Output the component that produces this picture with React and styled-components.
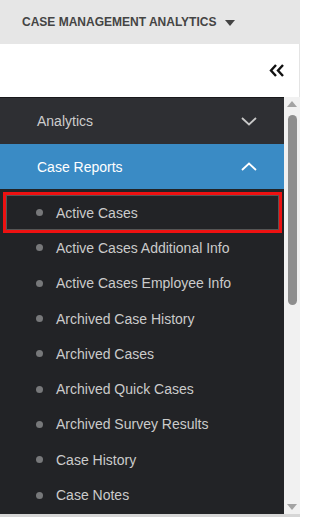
import React from 'react';
import styled, { createGlobalStyle } from 'styled-components';

const GlobalStyle = createGlobalStyle`
  html, body {
    margin: 0;
    padding: 0;
    background: #ffffff;
    font-family: "Liberation Sans", Arial, sans-serif;
  }
`;

const Page = styled.div`
  width: 300px;
  height: 517px;
  display: flex;
  flex-direction: column;
  overflow: hidden;
`;

const TopBar = styled.div`
  height: 44px;
  flex: none;
  background: #e6e6e6;
  display: flex;
  align-items: center;
  gap: 9px;
  padding-left: 22px;
  color: #444444;
  font-size: 12px;
  font-weight: bold;
  text-transform: uppercase;
`;

const Caret = styled.span`
  width: 0;
  height: 0;
  border-left: 5px solid transparent;
  border-right: 5px solid transparent;
  border-top: 6px solid #444444;
  margin-top: 1px;
`;

const CollapseBar = styled.div`
  height: 53px;
  flex: none;
  background: #ffffff;
  display: flex;
  align-items: center;
  justify-content: flex-end;
  padding-right: 14px;
  border-right: 1px solid #e4e4e4;
  box-sizing: border-box;
`;

const Body = styled.div`
  flex: 1;
  display: flex;
  min-height: 0;
  border-bottom: 3px solid #d6d6d6;
`;

const Menu = styled.div`
  flex: 1;
  background: #222326;
  border-top: 1px solid #18191b;
  overflow: hidden;
`;

const GroupRow = styled.div`
  height: ${(p) => p.$h}px;
  display: flex;
  align-items: center;
  justify-content: space-between;
  padding: 0 27px 0 37px;
  background: ${(p) => (p.$open ? '#3a8bc5' : '#2e2f33')};
  color: ${(p) => (p.$open ? '#ffffff' : '#cdcdcd')};
  font-size: 14px;
`;

const SubList = styled.div`
  padding-top: 6px;
`;

const SubItem = styled.div`
  position: relative;
  height: 35.3px;
  display: flex;
  align-items: center;
  padding-left: 36px;
  gap: 13px;
  color: #cbcbcb;
  font-size: 14px;

  ${(p) =>
    p.$selected &&
    `
    &::after {
      content: '';
      position: absolute;
      left: 3px;
      right: 2px;
      top: -3px;
      bottom: -3px;
      border: 3px solid #ee1111;
      box-shadow: inset 0 0 0 1px #555555;
    }
  `}
`;

const Bullet = styled.span`
  width: 7px;
  height: 7px;
  border-radius: 50%;
  background: #77787a;
  flex: none;
`;

const ScrollTrack = styled.div`
  width: 16px;
  flex: none;
  background: #f1f1f1;
  display: flex;
  flex-direction: column;
  align-items: center;
  padding: 4px 0 4px;
  box-sizing: border-box;
`;

const Arrow = styled.span`
  width: 0;
  height: 0;
  border-left: 5px solid transparent;
  border-right: 5px solid transparent;
  ${(p) => (p.$down ? 'border-top: 6px solid #a3a3a3;' : 'border-bottom: 6px solid #a3a3a3;')}
  margin-top: ${(p) => (p.$down ? 'auto' : '0')};
`;

const Thumb = styled.div`
  width: 9px;
  height: 190px;
  margin-top: 8px;
  border-radius: 5px;
  background: #8e8e8e;
`;

const Chevron = ({ up, color }) => (
  <svg width="16" height="9" viewBox="0 0 16 9">
    <polyline
      points={up ? '1,8 8,1.5 15,8' : '1,1 8,7.5 15,1'}
      fill="none"
      stroke={color}
      strokeWidth="1.8"
    />
  </svg>
);

const DoubleLeft = () => (
  <svg width="16" height="13" viewBox="0 0 16 13">
    <polyline points="7,1 2,6.5 7,12" fill="none" stroke="#111" strokeWidth="2.4" />
    <polyline points="14,1 9,6.5 14,12" fill="none" stroke="#111" strokeWidth="2.4" />
  </svg>
);

const reports = [
  'Active Cases',
  'Active Cases Additional Info',
  'Active Cases Employee Info',
  'Archived Case History',
  'Archived Cases',
  'Archived Quick Cases',
  'Archived Survey Results',
  'Case History',
  'Case Notes',
];

export default function App() {
  return (
    <Page>
      <GlobalStyle />
      <TopBar>
        Case Management Analytics
        <Caret />
      </TopBar>
      <CollapseBar>
        <DoubleLeft />
      </CollapseBar>
      <Body>
        <Menu>
          <GroupRow $h={46}>
            Analytics
            <Chevron color="#c8c8c8" />
          </GroupRow>
          <GroupRow $h={45} $open>
            Case Reports
            <Chevron up color="#ffffff" />
          </GroupRow>
          <SubList>
            {reports.map((name, i) => (
              <SubItem key={name} $selected={i === 0}>
                <Bullet />
                {name}
              </SubItem>
            ))}
          </SubList>
        </Menu>
        <ScrollTrack>
          <Arrow />
          <Thumb />
          <Arrow $down />
        </ScrollTrack>
      </Body>
    </Page>
  );
}
